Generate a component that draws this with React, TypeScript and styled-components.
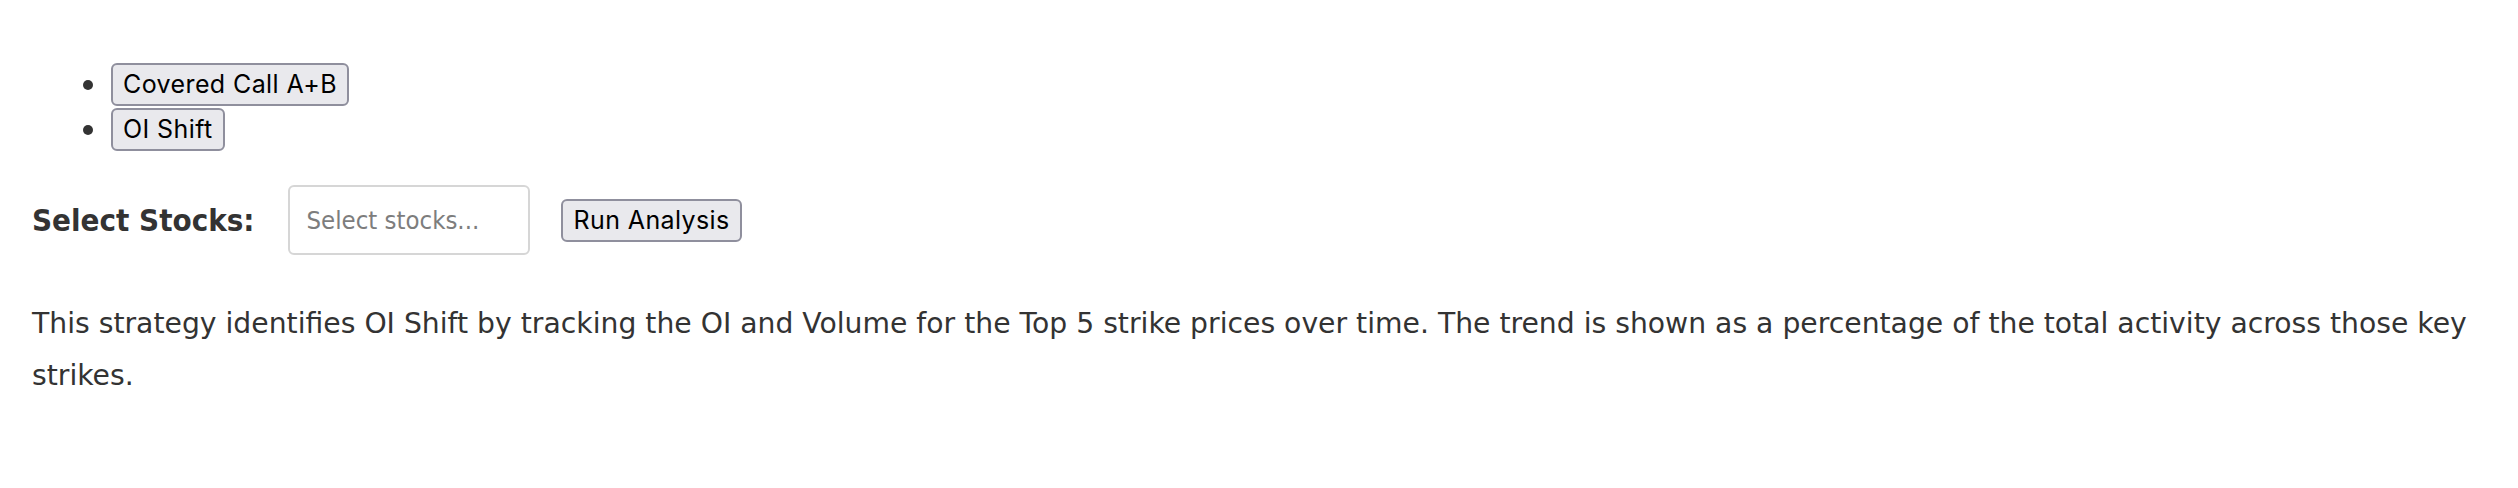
import React from "react";
import styled, { createGlobalStyle } from "styled-components";

const GlobalStyle = createGlobalStyle`
  html, body {
    margin: 0;
    padding: 0;
    background: #ffffff;
  }
  body {
    font-family: "DejaVu Sans", sans-serif;
    color: #333333;
  }
`;

const Page = styled.div`
  padding: 62px 32px 0 32px;
`;

const TabList = styled.ul`
  list-style: none;
  margin: 0;
  padding: 0 0 0 51px;
  display: flex;
  flex-direction: column;
`;

const TabItem = styled.li`
  height: 45px;
  display: flex;
  align-items: center;
  gap: 18px;

  &::before {
    content: "";
    width: 10px;
    height: 10px;
    border-radius: 50%;
    background: #333333;
    flex: none;
  }
`;

const NativeButton = styled.button`
  font-family: "Inter", "Liberation Sans", sans-serif;
  font-size: 25px;
  letter-spacing: 0.4px;
  color: #000000;
  background: #e9e9ed;
  border: 2px solid #8f8f9d;
  border-radius: 6px;
  height: 43px;
  padding: 0 10px;
  line-height: 1;
  cursor: pointer;
`;

const ControlRow = styled.div`
  margin-top: 33px;
  display: flex;
  align-items: center;
  height: 70px;
`;

const Label = styled.label`
  font-family: "DejaVu Sans Condensed", "DejaVu Sans", sans-serif;
  font-weight: bold;
  font-size: 31px;
  color: #333333;
  margin-right: 34px;
`;

const StockInput = styled.input`
  box-sizing: border-box;
  width: 242px;
  height: 70px;
  border: 2px solid #d6d6d6;
  border-radius: 6px;
  padding: 0 16px;
  font-family: "DejaVu Sans Condensed", "DejaVu Sans", sans-serif;
  font-size: 25.5px;
  color: #333333;
  margin-right: 31px;
  outline: none;

  &::placeholder {
    color: #7d7d7d;
  }
`;

const Description = styled.p`
  margin: 43px 0 0 0;
  font-family: "DejaVu Sans", sans-serif;
  font-size: 28.25px;
  line-height: 52px;
  color: #333333;
`;

export default function App() {
  return (
    <>
      <GlobalStyle />
      <Page>
        <TabList>
          <TabItem>
            <NativeButton>Covered Call A+B</NativeButton>
          </TabItem>
          <TabItem>
            <NativeButton>OI Shift</NativeButton>
          </TabItem>
        </TabList>
        <ControlRow>
          <Label>Select Stocks:</Label>
          <StockInput placeholder="Select stocks..." />
          <NativeButton>Run Analysis</NativeButton>
        </ControlRow>
        <Description>
          This strategy identifies OI Shift by tracking the OI and Volume for
          the Top 5 strike prices over time. The trend is shown as a percentage
          of the total activity across those key strikes.
        </Description>
      </Page>
    </>
  );
}
